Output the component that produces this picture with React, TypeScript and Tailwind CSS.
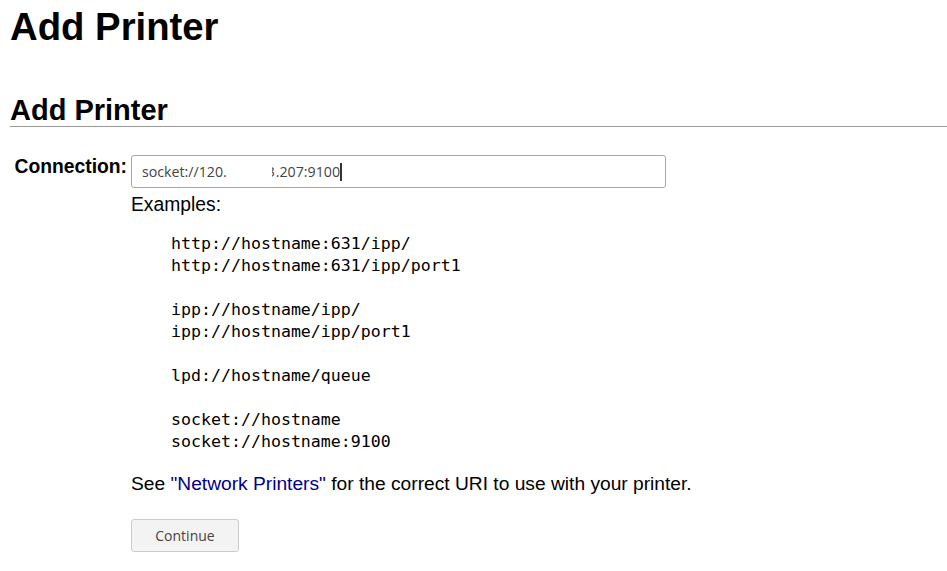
import React from 'react';

const examples = [
  'http://hostname:631/ipp/',
  'http://hostname:631/ipp/port1',
  '',
  'ipp://hostname/ipp/',
  'ipp://hostname/ipp/port1',
  '',
  'lpd://hostname/queue',
  '',
  'socket://hostname',
  'socket://hostname:9100',
];

const App = () => {
  return (
    <div className="bg-white min-h-[571px] w-[947px] text-black font-['Liberation_Sans',Arial,sans-serif]">
      <h1 className="text-[38.3px] font-bold leading-none pl-[10px] pt-[8px]">Add Printer</h1>

      <h2 className="mt-[50px] ml-[10px] text-[29px] font-bold leading-none pb-[1px] border-b border-[#999999]">
        Add Printer
      </h2>

      <div className="flex mt-[28px]">
        {/* label column */}
        <div className="w-[127px] text-right text-[19.3px] font-bold pt-[1px] leading-[22px]">Connection:</div>

        <div className="ml-[4px] flex-1">
          <div className="relative w-[535px] h-[33px] border border-[#98b878] rounded-[3px] flex items-center pl-[10px] text-[14.2px] text-[#444] font-['Open_Sans',sans-serif]">
            <span>socket://120.</span>
            <span className="inline-block w-[45px]" />
            <span className="inline-block overflow-hidden w-[4px] text-right">
              <span className="relative -left-[5px]">3</span>
            </span>
            <span>.207:9100</span>
            <span className="inline-block w-[2px] h-[18px] bg-[#333]" />
          </div>

          <div className="mt-[6px] text-[19.3px] leading-[22px]">Examples:</div>

          <pre className="mt-[17px] ml-[40px] font-['DejaVu_Sans_Mono',monospace] text-[16.6px] leading-[22px]">
            {examples.join('\n')}
          </pre>

          <p className="mt-[20px] text-[19.2px] leading-[22px]">
            See <a href="#" className="text-[#00008b]">"Network Printers"</a> for the correct URI to use with your printer.
          </p>

          <button className="mt-[24px] w-[108px] h-[33px] bg-[#f3f3f3] border border-[#ccc] rounded-[3px] text-[14px] text-[#444] font-['Open_Sans',sans-serif]">
            Continue
          </button>
        </div>
      </div>
    </div>
  );
};

export default App;
